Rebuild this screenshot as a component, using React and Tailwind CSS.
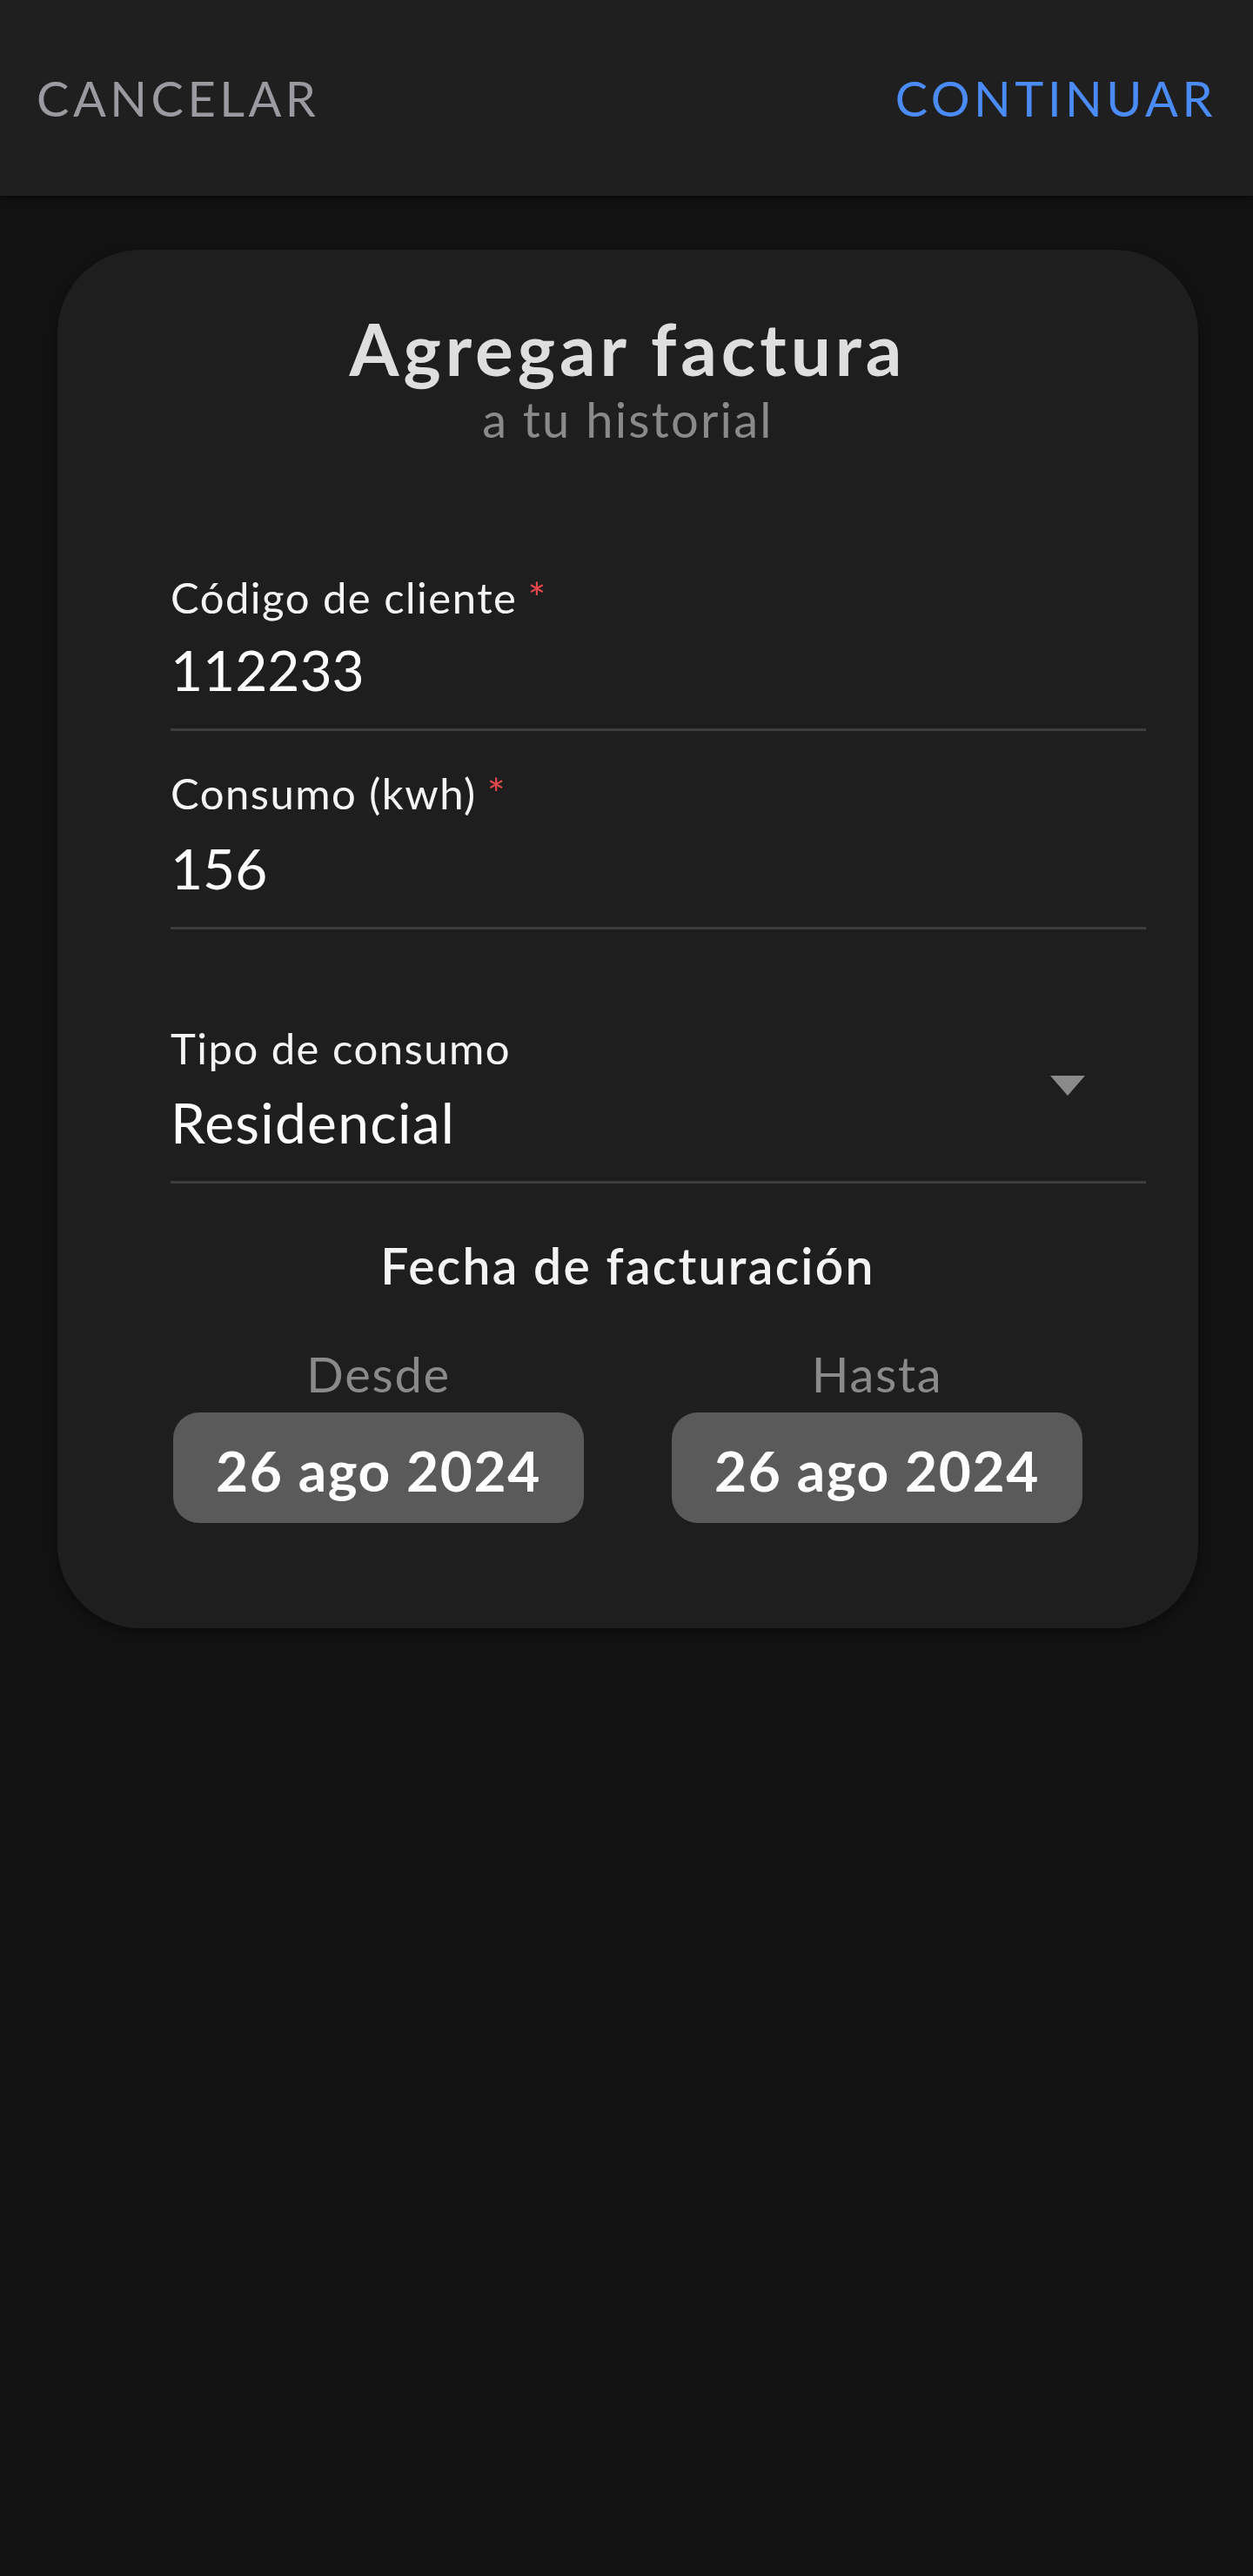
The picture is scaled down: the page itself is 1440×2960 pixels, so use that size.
import React from "react";

function Field({ label, value, required, select, gap = 27 }) {
  return (
    <div className="border-b-[3px] border-[#3d3d3d]">
      <div className="flex items-center">
        <div className="flex-1">
          <div className="text-[49px] leading-none tracking-[0.03em] text-[#f5f5f5]">
            {label}
            {required && <span className="ml-[12px] text-[#e5484d]">*</span>}
          </div>
          <div
            className={
              "text-[64px] leading-none text-white " +
              (gap === 30 ? "mt-[30px]" : gap === 29 ? "mt-[29px] tracking-[0.02em]" : "mt-[27px]")
            }
          >
            {value}
          </div>
        </div>
        {select && (
          <svg width="40" height="23" viewBox="0 0 40 23" className="mr-[70px] mb-[8px]">
            <path d="M0 0 L40 0 L20 23 Z" fill="#8a8a8a" />
          </svg>
        )}
      </div>
      <div className="h-[35px]" />
    </div>
  );
}

function DateBox({ label, value }) {
  return (
    <div className="flex w-[472px] flex-col items-center">
      <div className="text-[56px] leading-none tracking-[0.03em] text-[#8a8a8a]">{label}</div>
      <div className="mt-[16px] flex h-[127px] w-full items-center justify-center rounded-[30px] bg-[#5a5a5a] pt-[6px]">
        <span className="text-[64px] font-bold leading-none tracking-[0.025em] text-white">{value}</span>
      </div>
    </div>
  );
}

export default function App() {
  return (
    <div className="min-h-screen bg-[#121212] font-['Lato',sans-serif]">
      <header className="flex h-[225px] items-center justify-between bg-[#1f1f1f] px-[42px] shadow-[0_3px_6px_rgba(0,0,0,0.5)]">
        <button className="text-[56px] leading-none tracking-[0.08em] text-[#9a9ba0]">CANCELAR</button>
        <button className="text-[56px] leading-none tracking-[0.08em] text-[#4b8bf5]">CONTINUAR</button>
      </header>

      <div className="ml-[66px] mr-[63px] mt-[62px] rounded-[96px] bg-[#1e1e1e] pt-[72px] pb-[121px] shadow-[0_4px_12px_rgba(0,0,0,0.4)]">
        <h1 className="text-center text-[82px] font-bold leading-none tracking-[0.06em] text-[#dedede]">Agregar factura</h1>
        <p className="mt-[13px] text-center text-[56px] leading-none tracking-[0.04em] text-[#8a8a8a]">a tu historial</p>

        <div className="mt-[152px] pl-[130px] pr-[60px]">
          <Field label="Código de cliente" value="112233" required />
          <div className="mt-[47px]">
            <Field label="Consumo (kwh)" value="156" required gap={30} />
          </div>
          <div className="mt-[112px]">
            <Field label="Tipo de consumo" value="Residencial" select gap={29} />
          </div>
        </div>

        <h2 className="mt-[66px] text-center text-[57px] font-semibold leading-none tracking-[0.04em] text-[#f5f5f5]">Fecha de facturación</h2>

        <div className="mt-[68px] flex justify-center gap-[101px]">
          <DateBox label="Desde" value="26 ago 2024" />
          <DateBox label="Hasta" value="26 ago 2024" />
        </div>
      </div>
    </div>
  );
}
